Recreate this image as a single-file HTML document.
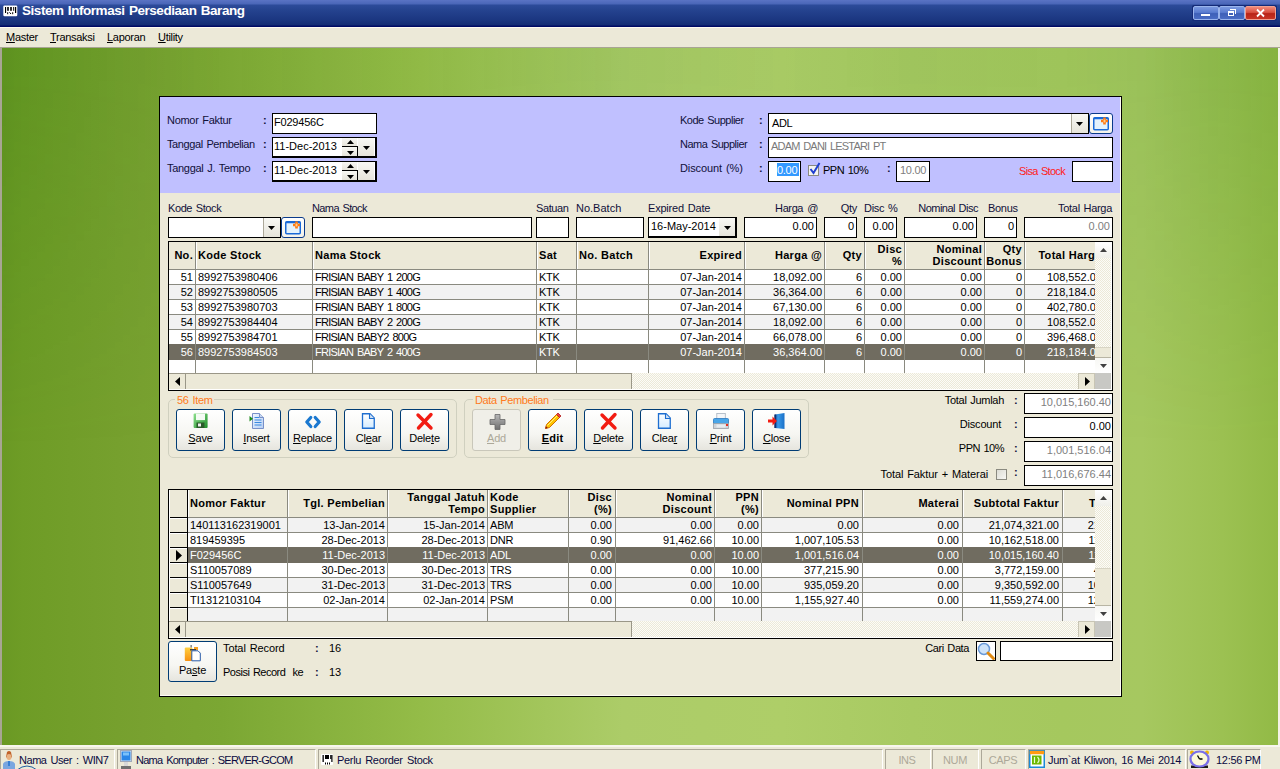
<!DOCTYPE html><html><head><meta charset="utf-8"><style>
*{margin:0;padding:0}
html,body{width:1280px;height:769px;overflow:hidden}
body{position:relative;font-family:"Liberation Sans",sans-serif;font-size:11px;color:#000;background:#ECE9D8}
.a{position:absolute}
.t{position:absolute;white-space:pre;line-height:13px;letter-spacing:-0.4px;word-spacing:1.5px;color:#10103a}
.r{text-align:right}
.c{text-align:center}
.n{letter-spacing:0;word-spacing:0}
.b{font-weight:bold;letter-spacing:0.3px;word-spacing:0;color:#000}
.u{text-decoration:underline}
svg{position:absolute;overflow:visible}
</style></head><body>
<div class="a" style="left:0px;top:0px;width:1280px;height:27px;background:linear-gradient(to bottom,#5a73c4 0px,#4a66b8 4px,#2d4b9a 5px,#25438f 10px,#1b3680 20px,#142d74 25px,#000a64 26px,#000a64 27px)"></div>
<div class="t" style="left:22px;top:3px;font-weight:bold;font-size:13.5px;letter-spacing:-0.45px;word-spacing:1px;color:#fff;line-height:16px">Sistem Informasi Persediaan Barang</div>
<svg style="left:3px;top:5px" width="15" height="12" viewBox="0 0 15 12"><rect x="0.3" y="0.6" width="14" height="10.6" rx="1.2" fill="#fff"/><rect x="2" y="2" width="1.1" height="6" fill="#000"/><rect x="4.2" y="2" width="1.6" height="3.8" fill="#000"/><rect x="7.2" y="2" width="1.6" height="3.8" fill="#000"/><rect x="10.2" y="2" width="1" height="3.8" fill="#000"/><rect x="12" y="2" width="1.2" height="6" fill="#000"/><rect x="4.2" y="7.2" width="1" height="2" fill="#000"/><path d="M6.5 7.3L8 9" stroke="#000" stroke-width="1"/><rect x="9.2" y="7.2" width="1" height="2" fill="#000"/></svg>
<div class="a" style="left:1192px;top:5px;width:85px;height:16px;background:#142a78;border-radius:2px"></div>
<div class="a" style="left:1193px;top:6px;width:26px;height:14px;background:linear-gradient(to bottom,#7a98e0 0%,#5a7cd0 45%,#3e60b8 55%,#4a6cc4 100%);border:1px solid #9ab4ec;box-sizing:border-box;border-radius:2px"></div>
<div class="a" style="left:1219px;top:6px;width:26px;height:14px;background:linear-gradient(to bottom,#7a98e0 0%,#5a7cd0 45%,#3e60b8 55%,#4a6cc4 100%);border:1px solid #9ab4ec;box-sizing:border-box;border-radius:2px"></div>
<div class="a" style="left:1245px;top:6px;width:31px;height:14px;background:linear-gradient(to bottom,#f08878 0%,#d85040 45%,#b82418 55%,#c83424 100%);border:1px solid #f0a090;box-sizing:border-box;border-radius:2px"></div>
<div class="a" style="left:1201px;top:14px;width:9px;height:2px;background:#fff"></div>
<div class="a" style="left:1228px;top:11px;width:6px;height:5px;border:1px solid #fff;border-top-width:2px;box-sizing:border-box"></div>
<div class="a" style="left:1230px;top:9px;width:6px;height:5px;border:1px solid #fff;border-top-width:1px;border-left:none;border-bottom:none;box-sizing:border-box"></div>
<svg style="left:1256px;top:9px" width="9" height="8"><path d="M1 0.5L8 7.5M8 0.5L1 7.5" stroke="#fff" stroke-width="1.8"/></svg>
<div class="a" style="left:0px;top:27px;width:1280px;height:1px;background:#fffbf0"></div>
<div class="a" style="left:0px;top:28px;width:1280px;height:19px;background:#ECE9D8"></div>
<div class="t" style="left:6px;top:31px;color:#000;letter-spacing:-0.3px"><span class="u">M</span>aster</div>
<div class="t" style="left:50px;top:31px;color:#000;letter-spacing:-0.3px"><span class="u">T</span>ransaksi</div>
<div class="t" style="left:107px;top:31px;color:#000;letter-spacing:-0.3px"><span class="u">L</span>aporan</div>
<div class="t" style="left:158px;top:31px;color:#000;letter-spacing:-0.3px"><span class="u">U</span>tility</div>
<div class="a" style="left:0px;top:47px;width:1280px;height:1px;background:#a8a594"></div>
<div class="a" style="left:0px;top:48px;width:2px;height:699px;background:#a8a594"></div>
<div class="a" style="left:2px;top:48px;width:1276px;height:697px;background:linear-gradient(to right,rgb(106,153,36) 0px,rgb(110,156,38) 20px,rgb(120,161,48) 140px,rgb(123,167,51) 220px,rgb(148,188,72) 420px,rgb(172,204,104) 620px,rgb(174,206,104) 780px,rgb(168,202,98) 910px,rgb(165,200,94) 1060px,rgb(166,200,96) 1140px,rgb(156,193,82) 1220px,rgb(146,186,70) 1276px)"></div>
<div class="a" style="left:2px;top:48px;width:1276px;height:400px;background:linear-gradient(to right,rgba(0,100,0,.12) 0px,rgba(0,100,0,.05) 140px,rgba(0,100,0,0) 220px,rgba(0,100,0,.02) 420px,rgba(0,100,0,.07) 600px,rgba(0,100,0,.03) 780px,rgba(0,100,0,.05) 910px,rgba(0,100,0,.04) 1060px,rgba(0,100,0,.07) 1140px,rgba(0,100,0,.10) 1210px,rgba(0,100,0,.08) 1276px);-webkit-mask-image:linear-gradient(to bottom,#000 0px,#000 22px,transparent 400px);mask-image:linear-gradient(to bottom,#000 0px,#000 22px,transparent 400px)"></div>
<div class="a" style="left:1278px;top:48px;width:2px;height:699px;background:#f4f2e8"></div>
<div class="a" style="left:0px;top:745px;width:1280px;height:2px;background:#f8f6ee"></div>
<div class="a" style="left:0px;top:747px;width:1280px;height:22px;background:#ECE9D8"></div>
<div class="a" style="left:0px;top:749px;width:115px;height:21px;box-sizing:border-box;border-left:1px solid #aca899;border-top:1px solid #aca899;border-right:1px solid #fff"></div>
<div class="a" style="left:117px;top:749px;width:199px;height:21px;box-sizing:border-box;border-left:1px solid #aca899;border-top:1px solid #aca899;border-right:1px solid #fff"></div>
<div class="a" style="left:318px;top:749px;width:565px;height:21px;box-sizing:border-box;border-left:1px solid #aca899;border-top:1px solid #aca899;border-right:1px solid #fff"></div>
<div class="a" style="left:885px;top:749px;width:46px;height:21px;box-sizing:border-box;border-left:1px solid #aca899;border-top:1px solid #aca899;border-right:1px solid #fff"></div>
<div class="a" style="left:932px;top:749px;width:47px;height:21px;box-sizing:border-box;border-left:1px solid #aca899;border-top:1px solid #aca899;border-right:1px solid #fff"></div>
<div class="a" style="left:981px;top:749px;width:45px;height:21px;box-sizing:border-box;border-left:1px solid #aca899;border-top:1px solid #aca899;border-right:1px solid #fff"></div>
<div class="a" style="left:1028px;top:749px;width:158px;height:21px;box-sizing:border-box;border-left:1px solid #aca899;border-top:1px solid #aca899;border-right:1px solid #fff"></div>
<div class="a" style="left:1187px;top:749px;width:74px;height:21px;box-sizing:border-box;border-left:1px solid #aca899;border-top:1px solid #aca899;border-right:1px solid #fff"></div>
<div class="t " style="left:19px;top:754px;color:#0a0a40;letter-spacing:-0.46px">Nama User : WIN7</div>
<div class="t " style="left:136px;top:754px;color:#0a0a40;letter-spacing:-0.75px">Nama Komputer : SERVER-GCOM</div>
<div class="t " style="left:337px;top:754px;color:#0a0a40;letter-spacing:-0.33px">Perlu Reorder Stock</div>
<div class="t c " style="left:707px;top:754px;width:400px;color:#aca899">INS</div>
<div class="t c " style="left:755px;top:754px;width:400px;color:#aca899">NUM</div>
<div class="t c " style="left:803px;top:754px;width:400px;color:#aca899">CAPS</div>
<div class="t " style="left:1048px;top:754px;color:#0a0a40;letter-spacing:-0.33px">Jum`at Kliwon, 16 Mei 2014</div>
<div class="t n" style="left:1216px;top:754px;color:#0a0a40;letter-spacing:-0.3px">12:56 PM</div>
<svg style="left:2px;top:750px" width="14" height="19" viewBox="0 0 14 19"><path d="M5 2 Q7 0 9 2 L10 7 Q7 10 4 7Z" fill="#c0622a"/><ellipse cx="7" cy="7" rx="2.5" ry="3" fill="#e8b080"/><path d="M1 19 L1 14 Q2 11 7 11 Q12 11 13 14 L13 19Z" fill="#7aa6e0"/><rect x="6.3" y="11" width="1.4" height="5" fill="#1a70d0"/></svg>
<svg style="left:16px;top:764px" width="22" height="6"><path d="M1 6 Q11 -2 21 6" fill="none" stroke="#2060a0" stroke-width="1"/></svg>
<svg style="left:120px;top:750px" width="12" height="19" viewBox="0 0 12 19"><rect x="0.5" y="0.5" width="11" height="11" fill="#dde6f0" stroke="#a0a8b8"/><rect x="1.5" y="1.5" width="9" height="9" fill="#2a86e8"/><rect x="3" y="2.5" width="6" height="3" fill="#8fd0ff" opacity=".8"/><rect x="4" y="12" width="4" height="4" fill="#d8d8d8"/><rect x="1" y="16" width="10" height="3" fill="#707070"/></svg>
<svg style="left:321px;top:754px" width="12" height="11" viewBox="0 0 12 11"><rect x="0" y="0" width="12" height="11" rx="1" fill="#fff"/><rect x="1.5" y="1" width="1.3" height="7" fill="#000"/><rect x="4" y="1" width="4" height="4" fill="#000"/><rect x="9.2" y="1" width="1.3" height="4" fill="#000"/><rect x="10.3" y="1" width="1.2" height="7" fill="#000"/><rect x="4" y="8.5" width="1" height="2" fill="#000"/><rect x="6" y="8.5" width="1" height="2" fill="#000"/><rect x="8" y="8.5" width="1" height="2" fill="#000"/></svg>
<svg style="left:1029px;top:750px" width="16" height="18" viewBox="0 0 16 18"><rect x="0.75" y="0.75" width="14.5" height="16.5" fill="#fff" stroke="#1c8ad8" stroke-width="1.5"/><rect x="0.75" y="0.75" width="14.5" height="3.5" fill="#ff9a10"/><rect x="3" y="5.5" width="9.5" height="9" fill="#6cb800"/><path d="M5.5 7v6M8.5 7q3 3 0 6" stroke="#e8ffd0" stroke-width="1.2" fill="none"/></svg>
<svg style="left:1189px;top:750px" width="21" height="18" viewBox="0 0 21 18"><circle cx="3" cy="2.5" r="2" fill="#f0b400"/><circle cx="18" cy="2.5" r="2" fill="#f0b400"/><rect x="2" y="15.5" width="17" height="2.5" fill="#1a1a1a"/><ellipse cx="10.5" cy="9" rx="9" ry="7.5" fill="#fbf8d8" stroke="#7a70e8" stroke-width="2.2"/><path d="M10.5 9 L8.5 5.5 M10.5 9 L13.5 9" stroke="#000" stroke-width="1.3"/></svg>
<div class="a" style="left:159px;top:96px;width:963px;height:601px;background:#ECE9D8;box-sizing:border-box;border:1px solid #000"></div>
<div class="a" style="left:1120px;top:97px;width:1px;height:599px;background:#fffdf6"></div>
<div class="a" style="left:160px;top:695px;width:961px;height:1px;background:#fffdf6"></div>
<div class="a" style="left:160px;top:97px;width:960px;height:96px;background:#C0C0FF"></div>
<div class="t " style="left:167px;top:114px;;letter-spacing:-0.3px;word-spacing:1px">Nomor Faktur</div>
<div class="t " style="left:263px;top:114px;font-weight:bold">:</div>
<div class="t " style="left:167px;top:138px;;letter-spacing:-0.4px;word-spacing:1px">Tanggal Pembelian</div>
<div class="t " style="left:263px;top:138px;font-weight:bold">:</div>
<div class="t " style="left:167px;top:162px;;letter-spacing:-0.3px;word-spacing:1px">Tanggal J. Tempo</div>
<div class="t " style="left:263px;top:162px;font-weight:bold">:</div>
<div class="a" style="left:272px;top:113px;width:105px;height:21px;background:#fff;box-sizing:border-box;border:1px solid #000;"></div>
<div class="t n" style="left:274px;top:116px;color:#000;letter-spacing:-0.2px">F029456C</div>
<div class="a" style="left:272px;top:137px;width:105px;height:21px;background:#fff;box-sizing:border-box;border:1px solid #000;border-right-width:2px;border-bottom-width:2px"></div>
<div class="t n" style="left:274px;top:140px;color:#000">11-Dec-2013</div>
<div class="a" style="left:342px;top:138px;width:15px;height:8px;background:linear-gradient(to bottom,#f8f8f4,#e6e4da)"></div>
<div class="a" style="left:342px;top:146px;width:16px;height:1px;background:#000"></div>
<div class="a" style="left:342px;top:147px;width:15px;height:9px;background:linear-gradient(to bottom,#f8f8f4,#e6e4da)"></div>
<div class="a" style="left:357px;top:147px;width:1px;height:9px;background:#000"></div>
<svg style="left:346.5px;top:140px" width="7" height="4"><path d="M0 4H7L3.5 0Z" fill="#000"/></svg>
<svg style="left:346.5px;top:151px" width="7" height="4"><path d="M0 0H7L3.5 4Z" fill="#000"/></svg>
<div class="a" style="left:358px;top:138px;width:16px;height:18px;background:linear-gradient(to bottom,#f8f8f4,#e6e4da)"></div>
<svg style="left:362.5px;top:146px" width="7" height="4"><path d="M0 0H7L3.5 4Z" fill="#000"/></svg>
<div class="a" style="left:272px;top:161px;width:105px;height:21px;background:#fff;box-sizing:border-box;border:1px solid #000;border-right-width:2px;border-bottom-width:2px"></div>
<div class="t n" style="left:274px;top:164px;color:#000">11-Dec-2013</div>
<div class="a" style="left:342px;top:162px;width:15px;height:8px;background:linear-gradient(to bottom,#f8f8f4,#e6e4da)"></div>
<div class="a" style="left:342px;top:170px;width:16px;height:1px;background:#000"></div>
<div class="a" style="left:342px;top:171px;width:15px;height:9px;background:linear-gradient(to bottom,#f8f8f4,#e6e4da)"></div>
<div class="a" style="left:357px;top:171px;width:1px;height:9px;background:#000"></div>
<svg style="left:346.5px;top:164px" width="7" height="4"><path d="M0 4H7L3.5 0Z" fill="#000"/></svg>
<svg style="left:346.5px;top:175px" width="7" height="4"><path d="M0 0H7L3.5 4Z" fill="#000"/></svg>
<div class="a" style="left:358px;top:162px;width:16px;height:18px;background:linear-gradient(to bottom,#f8f8f4,#e6e4da)"></div>
<svg style="left:362.5px;top:170px" width="7" height="4"><path d="M0 0H7L3.5 4Z" fill="#000"/></svg>
<div class="t " style="left:680px;top:114px;;letter-spacing:-0.5px;word-spacing:1px">Kode Supplier</div>
<div class="t " style="left:759px;top:114px;font-weight:bold">:</div>
<div class="t " style="left:680px;top:138px;;letter-spacing:-0.5px;word-spacing:1px">Nama Supplier</div>
<div class="t " style="left:759px;top:138px;font-weight:bold">:</div>
<div class="t " style="left:680px;top:162px;;letter-spacing:-0.1px;word-spacing:1px">Discount (%)</div>
<div class="t " style="left:759px;top:162px;font-weight:bold">:</div>
<div class="a" style="left:768px;top:113px;width:321px;height:21px;background:#fff;box-sizing:border-box;border:1px solid #000;"></div>
<div class="t " style="left:772px;top:117px;color:#000">ADL</div>
<div class="a" style="left:1071px;top:114px;width:17px;height:19px;background:linear-gradient(to bottom,#f8f8f4,#e6e4da);border-left:1px solid #aca899;box-sizing:border-box"></div>
<svg style="left:1076.0px;top:122.0px" width="7" height="4"><path d="M0 0H7L3.5 4Z" fill="#000"/></svg>
<div class="a" style="left:1089px;top:113px;width:24px;height:21px;background:linear-gradient(to bottom,#ffffff,#f4f2ea);box-sizing:border-box;border:1px solid #0a3a8a;border-radius:3px"></div>
<svg style="left:1093px;top:117px" width="16" height="14" viewBox="0 0 16 14"><rect x="0.75" y="0.75" width="14.5" height="12" rx="1" fill="#e4f2fc" stroke="#1a6ad8" stroke-width="1.5"/><rect x="0.75" y="0.75" width="14.5" height="1.5" fill="#1a6ad8"/><path d="M11.5 0.5V7.5M8 4H15" stroke="#ff7a10" stroke-width="2.6"/><path d="M11.5 2.5V5.5M10 4H13" stroke="#ffd8a0" stroke-width="0.8"/></svg>
<div class="a" style="left:768px;top:137px;width:345px;height:21px;background:#fff;box-sizing:border-box;border:1px solid #000;"></div>
<div class="t " style="left:771px;top:140px;color:#7a7a7a;letter-spacing:-0.82px">ADAM DANI LESTARI PT</div>
<div class="a" style="left:768px;top:161px;width:33px;height:21px;background:#fff;box-sizing:border-box;border:1px solid #000;"></div>
<div class="a" style="left:777px;top:163px;width:22px;height:13px;background:#3399ff"></div>
<div class="t n" style="left:777px;top:164px;color:#fff;letter-spacing:-0.3px">0.00</div>
<div class="a" style="left:808px;top:165px;width:11px;height:11px;background:#f4f4f0;box-sizing:border-box;border:1px solid #8a8a80"></div>
<svg style="left:809px;top:162px" width="12" height="13"><path d="M1.5 7 L4.5 11 L10.5 1" fill="none" stroke="#2040d0" stroke-width="2"/></svg>
<div class="t " style="left:823px;top:164px;color:#000;letter-spacing:-0.5px;word-spacing:1px">PPN 10%</div>
<div class="t " style="left:887px;top:162px;font-weight:bold">:</div>
<div class="a" style="left:896px;top:161px;width:34px;height:21px;background:#fff;box-sizing:border-box;border:1px solid #000;"></div>
<div class="t n" style="left:900px;top:164px;color:#808080;letter-spacing:-0.3px">10.00</div>
<div class="t " style="left:1019px;top:165px;color:#ff2020;letter-spacing:-0.7px;word-spacing:1px">Sisa Stock</div>
<div class="a" style="left:1072px;top:161px;width:41px;height:21px;background:#fff;box-sizing:border-box;border:1px solid #000;"></div>
<div class="t " style="left:168px;top:202px;;letter-spacing:-0.4px;word-spacing:1px">Kode Stock</div>
<div class="t " style="left:312px;top:202px;;letter-spacing:-0.6px;word-spacing:1px">Nama Stock</div>
<div class="t " style="left:536px;top:202px;;letter-spacing:-0.4px;word-spacing:1px">Satuan</div>
<div class="t " style="left:576px;top:202px;;letter-spacing:0.0px;word-spacing:1px">No.Batch</div>
<div class="t " style="left:648px;top:202px;;letter-spacing:-0.2px;word-spacing:1px">Expired Date</div>
<div class="t r " style="left:418px;top:202px;width:400px;">Harga @</div>
<div class="t r " style="left:457px;top:202px;width:400px;;letter-spacing:-0.3px;word-spacing:1px">Qty</div>
<div class="t " style="left:864px;top:202px;;letter-spacing:-0.3px;word-spacing:1px">Disc %</div>
<div class="t r " style="left:578px;top:202px;width:400px;;letter-spacing:-0.5px;word-spacing:1px">Nominal Disc</div>
<div class="t " style="left:988px;top:202px;;letter-spacing:-0.3px;word-spacing:1px">Bonus</div>
<div class="t r " style="left:712px;top:202px;width:400px;;letter-spacing:-0.3px;word-spacing:1px">Total Harga</div>
<div class="a" style="left:168px;top:217px;width:113px;height:21px;background:#fff;box-sizing:border-box;border:1px solid #000;"></div>
<div class="a" style="left:263px;top:218px;width:17px;height:19px;background:linear-gradient(to bottom,#f8f8f4,#e6e4da);border-left:1px solid #aca899;box-sizing:border-box"></div>
<svg style="left:268.0px;top:226.0px" width="7" height="4"><path d="M0 0H7L3.5 4Z" fill="#000"/></svg>
<div class="a" style="left:281px;top:217px;width:24px;height:21px;background:linear-gradient(to bottom,#ffffff,#f4f2ea);box-sizing:border-box;border:1px solid #0a3a8a;border-radius:3px"></div>
<svg style="left:285px;top:221px" width="16" height="14" viewBox="0 0 16 14"><rect x="0.75" y="0.75" width="14.5" height="12" rx="1" fill="#e4f2fc" stroke="#1a6ad8" stroke-width="1.5"/><rect x="0.75" y="0.75" width="14.5" height="1.5" fill="#1a6ad8"/><path d="M11.5 0.5V7.5M8 4H15" stroke="#ff7a10" stroke-width="2.6"/><path d="M11.5 2.5V5.5M10 4H13" stroke="#ffd8a0" stroke-width="0.8"/></svg>
<div class="a" style="left:312px;top:217px;width:220px;height:21px;background:#fff;box-sizing:border-box;border:1px solid #000;"></div>
<div class="a" style="left:536px;top:217px;width:33px;height:21px;background:#fff;box-sizing:border-box;border:1px solid #000;"></div>
<div class="a" style="left:576px;top:217px;width:68px;height:21px;background:#fff;box-sizing:border-box;border:1px solid #000;"></div>
<div class="a" style="left:648px;top:217px;width:89px;height:21px;background:#fff;box-sizing:border-box;border:1px solid #000;border-right-width:2px;border-bottom-width:2px"></div>
<div class="t n" style="left:651px;top:220px;color:#000">16-May-2014</div>
<div class="a" style="left:719px;top:218px;width:16px;height:18px;background:linear-gradient(to bottom,#f8f8f4,#e6e4da)"></div>
<svg style="left:723.5px;top:226px" width="7" height="4"><path d="M0 0H7L3.5 4Z" fill="#000"/></svg>
<div class="a" style="left:744px;top:217px;width:73px;height:21px;background:#fff;box-sizing:border-box;border:1px solid #000;"></div>
<div class="t r n" style="left:414px;top:220px;width:400px;color:#000">0.00</div>
<div class="a" style="left:824px;top:217px;width:33px;height:21px;background:#fff;box-sizing:border-box;border:1px solid #000;"></div>
<div class="t r n" style="left:454px;top:220px;width:400px;color:#000">0</div>
<div class="a" style="left:864px;top:217px;width:33px;height:21px;background:#fff;box-sizing:border-box;border:1px solid #000;"></div>
<div class="t r n" style="left:494px;top:220px;width:400px;color:#000">0.00</div>
<div class="a" style="left:904px;top:217px;width:73px;height:21px;background:#fff;box-sizing:border-box;border:1px solid #000;"></div>
<div class="t r n" style="left:574px;top:220px;width:400px;color:#000">0.00</div>
<div class="a" style="left:984px;top:217px;width:33px;height:21px;background:#fff;box-sizing:border-box;border:1px solid #000;"></div>
<div class="t r n" style="left:614px;top:220px;width:400px;color:#000">0</div>
<div class="a" style="left:1024px;top:217px;width:89px;height:21px;background:#fff;box-sizing:border-box;border:1px solid #000;"></div>
<div class="t r n" style="left:710px;top:220px;width:400px;color:#808080">0.00</div>
<div class="a" style="left:168px;top:241px;width:945px;height:150px;background:#fff;box-sizing:border-box;border:1px solid #000"></div>
<div class="a" style="left:169px;top:242px;width:926px;height:27px;background:#ECE9D8"></div>
<div class="a" style="left:169px;top:269px;width:926px;height:1px;background:#8a8a80"></div>
<div class="a" style="left:169px;top:270px;width:926px;height:14px;background:#fff"></div>
<div class="a" style="left:169px;top:284px;width:926px;height:1px;background:#8a8a80"></div>
<div class="a" style="left:169px;top:285px;width:926px;height:14px;background:#f2f2f2"></div>
<div class="a" style="left:169px;top:299px;width:926px;height:1px;background:#8a8a80"></div>
<div class="a" style="left:169px;top:300px;width:926px;height:14px;background:#fff"></div>
<div class="a" style="left:169px;top:314px;width:926px;height:1px;background:#8a8a80"></div>
<div class="a" style="left:169px;top:315px;width:926px;height:14px;background:#f2f2f2"></div>
<div class="a" style="left:169px;top:329px;width:926px;height:1px;background:#8a8a80"></div>
<div class="a" style="left:169px;top:330px;width:926px;height:14px;background:#fff"></div>
<div class="a" style="left:169px;top:344px;width:926px;height:1px;background:#8a8a80"></div>
<div class="a" style="left:169px;top:345px;width:926px;height:14px;background:#fff"></div>
<div class="a" style="left:169px;top:359px;width:926px;height:1px;background:#8a8a80"></div>
<div class="a" style="left:169px;top:360px;width:926px;height:13px;background:#fff"></div>
<div class="a" style="left:169px;top:344px;width:926px;height:16px;background:#706c60"></div>
<div class="a" style="left:195px;top:242px;width:1px;height:131px;background:#8a8a80"></div>
<div class="a" style="left:196px;top:242px;width:1px;height:27px;background:#fff"></div>
<div class="a" style="left:312px;top:242px;width:1px;height:131px;background:#8a8a80"></div>
<div class="a" style="left:313px;top:242px;width:1px;height:27px;background:#fff"></div>
<div class="a" style="left:536px;top:242px;width:1px;height:131px;background:#8a8a80"></div>
<div class="a" style="left:537px;top:242px;width:1px;height:27px;background:#fff"></div>
<div class="a" style="left:576px;top:242px;width:1px;height:131px;background:#8a8a80"></div>
<div class="a" style="left:577px;top:242px;width:1px;height:27px;background:#fff"></div>
<div class="a" style="left:648px;top:242px;width:1px;height:131px;background:#8a8a80"></div>
<div class="a" style="left:649px;top:242px;width:1px;height:27px;background:#fff"></div>
<div class="a" style="left:744px;top:242px;width:1px;height:131px;background:#8a8a80"></div>
<div class="a" style="left:745px;top:242px;width:1px;height:27px;background:#fff"></div>
<div class="a" style="left:824px;top:242px;width:1px;height:131px;background:#8a8a80"></div>
<div class="a" style="left:825px;top:242px;width:1px;height:27px;background:#fff"></div>
<div class="a" style="left:864px;top:242px;width:1px;height:131px;background:#8a8a80"></div>
<div class="a" style="left:865px;top:242px;width:1px;height:27px;background:#fff"></div>
<div class="a" style="left:904px;top:242px;width:1px;height:131px;background:#8a8a80"></div>
<div class="a" style="left:905px;top:242px;width:1px;height:27px;background:#fff"></div>
<div class="a" style="left:984px;top:242px;width:1px;height:131px;background:#8a8a80"></div>
<div class="a" style="left:985px;top:242px;width:1px;height:27px;background:#fff"></div>
<div class="a" style="left:1024px;top:242px;width:1px;height:131px;background:#8a8a80"></div>
<div class="a" style="left:1025px;top:242px;width:1px;height:27px;background:#fff"></div>
<div class="t r b" style="left:-207px;top:249px;width:400px;">No.</div>
<div class="t b" style="left:198px;top:249px;">Kode Stock</div>
<div class="t b" style="left:315px;top:249px;">Nama Stock</div>
<div class="t b" style="left:539px;top:249px;">Sat</div>
<div class="t b" style="left:579px;top:249px;">No. Batch</div>
<div class="t r b" style="left:342px;top:249px;width:400px;">Expired</div>
<div class="t r b" style="left:422px;top:249px;width:400px;">Harga @</div>
<div class="t r b" style="left:462px;top:249px;width:400px;">Qty</div>
<div class="t r b" style="left:502px;top:243px;width:400px;">Disc</div>
<div class="t r b" style="left:502px;top:255px;width:400px;">%</div>
<div class="t r b" style="left:582px;top:243px;width:400px;">Nominal</div>
<div class="t r b" style="left:582px;top:255px;width:400px;">Discount</div>
<div class="t r b" style="left:622px;top:243px;width:400px;">Qty</div>
<div class="t r b" style="left:622px;top:255px;width:400px;">Bonus</div>
<div class="a" style="left:1025px;top:242px;width:70px;height:27px;overflow:hidden">
<div class="t b r" style="left:-200px;top:7px;width:270px">Total Harg</div>
</div>
<div class="t r n" style="left:-207px;top:271px;width:400px;color:#000">51</div>
<div class="t n" style="left:198px;top:271px;color:#000">8992753980406</div>
<div class="t " style="left:315px;top:271px;color:#000;letter-spacing:-0.75px">FRISIAN BABY 1 200G</div>
<div class="t " style="left:539px;top:271px;color:#000;letter-spacing:-0.3px">KTK</div>
<div class="t r n" style="left:342px;top:271px;width:400px;color:#000">07-Jan-2014</div>
<div class="t r n" style="left:422px;top:271px;width:400px;color:#000">18,092.00</div>
<div class="t r n" style="left:462px;top:271px;width:400px;color:#000">6</div>
<div class="t r n" style="left:502px;top:271px;width:400px;color:#000">0.00</div>
<div class="t r n" style="left:582px;top:271px;width:400px;color:#000">0.00</div>
<div class="t r n" style="left:622px;top:271px;width:400px;color:#000">0</div>
<div class="a" style="left:1025px;top:269px;width:70px;height:15px;overflow:hidden"><div class="t n r" style="left:0;top:2px;width:77px;color:#000">108,552.00</div></div>
<div class="t r n" style="left:-207px;top:286px;width:400px;color:#000">52</div>
<div class="t n" style="left:198px;top:286px;color:#000">8992753980505</div>
<div class="t " style="left:315px;top:286px;color:#000;letter-spacing:-0.75px">FRISIAN BABY 1 400G</div>
<div class="t " style="left:539px;top:286px;color:#000;letter-spacing:-0.3px">KTK</div>
<div class="t r n" style="left:342px;top:286px;width:400px;color:#000">07-Jan-2014</div>
<div class="t r n" style="left:422px;top:286px;width:400px;color:#000">36,364.00</div>
<div class="t r n" style="left:462px;top:286px;width:400px;color:#000">6</div>
<div class="t r n" style="left:502px;top:286px;width:400px;color:#000">0.00</div>
<div class="t r n" style="left:582px;top:286px;width:400px;color:#000">0.00</div>
<div class="t r n" style="left:622px;top:286px;width:400px;color:#000">0</div>
<div class="a" style="left:1025px;top:284px;width:70px;height:15px;overflow:hidden"><div class="t n r" style="left:0;top:2px;width:77px;color:#000">218,184.00</div></div>
<div class="t r n" style="left:-207px;top:301px;width:400px;color:#000">53</div>
<div class="t n" style="left:198px;top:301px;color:#000">8992753980703</div>
<div class="t " style="left:315px;top:301px;color:#000;letter-spacing:-0.75px">FRISIAN BABY 1 800G</div>
<div class="t " style="left:539px;top:301px;color:#000;letter-spacing:-0.3px">KTK</div>
<div class="t r n" style="left:342px;top:301px;width:400px;color:#000">07-Jan-2014</div>
<div class="t r n" style="left:422px;top:301px;width:400px;color:#000">67,130.00</div>
<div class="t r n" style="left:462px;top:301px;width:400px;color:#000">6</div>
<div class="t r n" style="left:502px;top:301px;width:400px;color:#000">0.00</div>
<div class="t r n" style="left:582px;top:301px;width:400px;color:#000">0.00</div>
<div class="t r n" style="left:622px;top:301px;width:400px;color:#000">0</div>
<div class="a" style="left:1025px;top:299px;width:70px;height:15px;overflow:hidden"><div class="t n r" style="left:0;top:2px;width:77px;color:#000">402,780.00</div></div>
<div class="t r n" style="left:-207px;top:316px;width:400px;color:#000">54</div>
<div class="t n" style="left:198px;top:316px;color:#000">8992753984404</div>
<div class="t " style="left:315px;top:316px;color:#000;letter-spacing:-0.75px">FRISIAN BABY 2 200G</div>
<div class="t " style="left:539px;top:316px;color:#000;letter-spacing:-0.3px">KTK</div>
<div class="t r n" style="left:342px;top:316px;width:400px;color:#000">07-Jan-2014</div>
<div class="t r n" style="left:422px;top:316px;width:400px;color:#000">18,092.00</div>
<div class="t r n" style="left:462px;top:316px;width:400px;color:#000">6</div>
<div class="t r n" style="left:502px;top:316px;width:400px;color:#000">0.00</div>
<div class="t r n" style="left:582px;top:316px;width:400px;color:#000">0.00</div>
<div class="t r n" style="left:622px;top:316px;width:400px;color:#000">0</div>
<div class="a" style="left:1025px;top:314px;width:70px;height:15px;overflow:hidden"><div class="t n r" style="left:0;top:2px;width:77px;color:#000">108,552.00</div></div>
<div class="t r n" style="left:-207px;top:331px;width:400px;color:#000">55</div>
<div class="t n" style="left:198px;top:331px;color:#000">8992753984701</div>
<div class="t " style="left:315px;top:331px;color:#000;letter-spacing:-0.75px">FRISIAN BABY2 800G</div>
<div class="t " style="left:539px;top:331px;color:#000;letter-spacing:-0.3px">KTK</div>
<div class="t r n" style="left:342px;top:331px;width:400px;color:#000">07-Jan-2014</div>
<div class="t r n" style="left:422px;top:331px;width:400px;color:#000">66,078.00</div>
<div class="t r n" style="left:462px;top:331px;width:400px;color:#000">6</div>
<div class="t r n" style="left:502px;top:331px;width:400px;color:#000">0.00</div>
<div class="t r n" style="left:582px;top:331px;width:400px;color:#000">0.00</div>
<div class="t r n" style="left:622px;top:331px;width:400px;color:#000">0</div>
<div class="a" style="left:1025px;top:329px;width:70px;height:15px;overflow:hidden"><div class="t n r" style="left:0;top:2px;width:77px;color:#000">396,468.00</div></div>
<div class="t r n" style="left:-207px;top:346px;width:400px;color:#fff">56</div>
<div class="t n" style="left:198px;top:346px;color:#fff">8992753984503</div>
<div class="t " style="left:315px;top:346px;color:#fff;letter-spacing:-0.75px">FRISIAN BABY 2 400G</div>
<div class="t " style="left:539px;top:346px;color:#fff;letter-spacing:-0.3px">KTK</div>
<div class="t r n" style="left:342px;top:346px;width:400px;color:#fff">07-Jan-2014</div>
<div class="t r n" style="left:422px;top:346px;width:400px;color:#fff">36,364.00</div>
<div class="t r n" style="left:462px;top:346px;width:400px;color:#fff">6</div>
<div class="t r n" style="left:502px;top:346px;width:400px;color:#fff">0.00</div>
<div class="t r n" style="left:582px;top:346px;width:400px;color:#fff">0.00</div>
<div class="t r n" style="left:622px;top:346px;width:400px;color:#fff">0</div>
<div class="a" style="left:1025px;top:344px;width:70px;height:15px;overflow:hidden"><div class="t n r" style="left:0;top:2px;width:77px;color:#fff">218,184.00</div></div>
<div class="a" style="left:1095px;top:242px;width:16px;height:131px;background-color:#fcfcf8;background-image:linear-gradient(45deg,#ece9d8 25%,transparent 25%,transparent 75%,#ece9d8 75%),linear-gradient(45deg,#ece9d8 25%,transparent 25%,transparent 75%,#ece9d8 75%);background-size:2px 2px;background-position:0 0,1px 1px"></div>
<div class="a" style="left:1095px;top:242px;width:16px;height:16px;background:linear-gradient(to bottom,#ffffff,#f0f0ea)"></div>
<svg style="left:1099.5px;top:248px" width="7" height="4"><path d="M0 4H7L3.5 0Z" fill="#404040"/></svg>
<div class="a" style="left:1095px;top:357px;width:16px;height:16px;background:linear-gradient(to bottom,#f6f6f2,#ffffff)"></div>
<svg style="left:1099.5px;top:364px" width="7" height="4"><path d="M0 0H7L3.5 4Z" fill="#404040"/></svg>
<div class="a" style="left:1095px;top:347px;width:16px;height:11px;background:#ECE9D8;box-sizing:border-box;border-top:1px solid #d8d5c4;border-bottom:1px solid #b8b5a4"></div>
<div class="a" style="left:169px;top:373px;width:926px;height:16px;background-color:#fcfcf8;background-image:linear-gradient(45deg,#ece9d8 25%,transparent 25%,transparent 75%,#ece9d8 75%),linear-gradient(45deg,#ece9d8 25%,transparent 25%,transparent 75%,#ece9d8 75%);background-size:2px 2px;background-position:0 0,1px 1px"></div>
<div class="a" style="left:169px;top:373px;width:463px;height:16px;background:#ECE9D8;box-sizing:border-box;border-top:1px solid #9a9788;border-right:1px solid #9a9788"></div>
<div class="a" style="left:185px;top:373px;width:1px;height:16px;background:#9a9788"></div>
<svg style="left:175px;top:376.5px" width="5" height="9"><path d="M5 0V9L0 4.5Z" fill="#000"/></svg>
<div class="a" style="left:1078px;top:373px;width:17px;height:16px;background:#ECE9D8;box-sizing:border-box;border:1px solid #c8c5b4;border-bottom:none"></div>
<svg style="left:1085px;top:376.5px" width="5" height="9"><path d="M0 0V9L5 4.5Z" fill="#000"/></svg>
<div class="a" style="left:1095px;top:373px;width:16px;height:16px;background:#c8c8c4"></div>
<div class="a" style="left:168px;top:399px;width:289px;height:59px;box-sizing:border-box;border:1px solid #d0d0bf;border-radius:5px"></div>
<div class="a" style="left:175px;top:396px;width:39px;height:6px;background:#ECE9D8"></div>
<div class="t " style="left:177px;top:394px;color:#ff7a20;letter-spacing:-0.3px;word-spacing:1px">56 Item</div>
<div class="a" style="left:464px;top:399px;width:345px;height:59px;box-sizing:border-box;border:1px solid #d0d0bf;border-radius:5px"></div>
<div class="a" style="left:473px;top:396px;width:80px;height:6px;background:#ECE9D8"></div>
<div class="t " style="left:475px;top:394px;color:#ff7a20;letter-spacing:-0.4px;word-spacing:1px">Data Pembelian</div>
<div class="a" style="left:176px;top:409px;width:49px;height:42px;box-sizing:border-box;border:1px solid #003c74;border-radius:3px;background:linear-gradient(to bottom,#ffffff 0%,#f6f6f2 60%,#e6e5de 100%)"></div>
<svg style="left:192.5px;top:413px" width="17" height="17" viewBox="0 0 17 17"><defs><linearGradient id="gs" x1="0" y1="0" x2="1" y2="1"><stop offset="0" stop-color="#8ee08e"/><stop offset="1" stop-color="#1f8f2a"/></linearGradient></defs><rect x="0.6" y="0.6" width="14" height="14.4" rx="1" fill="url(#gs)"/><rect x="3" y="0.6" width="9" height="6.5" fill="#f4fbf4"/><rect x="3.5" y="9.5" width="8" height="5.5" fill="#2a5a2a"/><rect x="5" y="10.5" width="3" height="3" fill="#f0f0f0"/></svg>
<div class="t c" style="left:160.5px;top:432px;width:80px;color:#000;letter-spacing:-0.2px;"><span class="u">S</span>ave</div>
<div class="a" style="left:232px;top:409px;width:49px;height:42px;box-sizing:border-box;border:1px solid #003c74;border-radius:3px;background:linear-gradient(to bottom,#ffffff 0%,#f6f6f2 60%,#e6e5de 100%)"></div>
<svg style="left:248.5px;top:413px" width="17" height="17" viewBox="0 0 17 17"><defs><linearGradient id="gi" x1="0" y1="0" x2="1" y2="1"><stop offset="0" stop-color="#f0f6ff"/><stop offset="1" stop-color="#b8d0f4"/></linearGradient></defs><path d="M3.5 0.5H10.5L14.5 4.5V15.5H3.5Z" fill="url(#gi)" stroke="#7890c8"/><path d="M10.5 0.5V4.5H14.5" fill="#c8d8f0" stroke="#7890c8"/><path d="M5.5 4.5H10M5.5 7H12.5M5.5 9.5H12.5M5.5 12H12.5" stroke="#3a8ae0" stroke-width="1.1"/><path d="M0.5 3V8.5L4 5.75Z" fill="#1a8a1a"/></svg>
<div class="t c" style="left:216.5px;top:432px;width:80px;color:#000;letter-spacing:-0.2px;"><span class="u">I</span>nsert</div>
<div class="a" style="left:288px;top:409px;width:49px;height:42px;box-sizing:border-box;border:1px solid #003c74;border-radius:3px;background:linear-gradient(to bottom,#ffffff 0%,#f6f6f2 60%,#e6e5de 100%)"></div>
<svg style="left:304.5px;top:413px" width="17" height="17" viewBox="0 0 17 17"><path d="M5.8 4.5L1.8 9L5.8 13.5" fill="none" stroke="#1a78d0" stroke-width="3.2" stroke-linecap="round" stroke-linejoin="round"/><path d="M10.2 4.5L14.2 9L10.2 13.5" fill="none" stroke="#1a78d0" stroke-width="3.2" stroke-linecap="round" stroke-linejoin="round"/></svg>
<div class="t c" style="left:272.5px;top:432px;width:80px;color:#000;letter-spacing:-0.2px;"><span class="u">R</span>eplace</div>
<div class="a" style="left:344px;top:409px;width:49px;height:42px;box-sizing:border-box;border:1px solid #003c74;border-radius:3px;background:linear-gradient(to bottom,#ffffff 0%,#f6f6f2 60%,#e6e5de 100%)"></div>
<svg style="left:360.5px;top:413px" width="17" height="17" viewBox="0 0 17 17"><defs><linearGradient id="gc" x1="0" y1="0" x2="0" y2="1"><stop offset="0" stop-color="#ffffff"/><stop offset="1" stop-color="#d4ecff"/></linearGradient></defs><path d="M1.5 0.75H9L13.25 5V15.25H1.5Z" fill="url(#gc)" stroke="#1e6ed0" stroke-width="1.3"/><path d="M8.5 0.75V5.5H13.25" fill="#cfe0f4" stroke="#1e6ed0" stroke-width="1.1"/></svg>
<div class="t c" style="left:328.5px;top:432px;width:80px;color:#000;letter-spacing:-0.2px;">Cl<span class="u">e</span>ar</div>
<div class="a" style="left:400px;top:409px;width:49px;height:42px;box-sizing:border-box;border:1px solid #003c74;border-radius:3px;background:linear-gradient(to bottom,#ffffff 0%,#f6f6f2 60%,#e6e5de 100%)"></div>
<svg style="left:416.5px;top:413px" width="17" height="17" viewBox="0 0 17 17"><path d="M1 2L14 15M14 1.5L1.5 15" stroke="#f21c12" stroke-width="3.4" stroke-linecap="round"/></svg>
<div class="t c" style="left:384.5px;top:432px;width:80px;color:#000;letter-spacing:-0.2px;">Dele<span class="u">t</span>e</div>
<div class="a" style="left:472px;top:409px;width:49px;height:42px;box-sizing:border-box;border:1px solid #c9c7ba;border-radius:3px;background:#f0efe8"></div>
<svg style="left:488.5px;top:413px" width="17" height="17" viewBox="0 0 17 17"><defs><linearGradient id="ga" x1="0" y1="0" x2="0" y2="1"><stop offset="0" stop-color="#b8b8b8"/><stop offset="1" stop-color="#707070"/></linearGradient></defs><path d="M6 1.5H11V6.5H16V11.5H11V16.5H6V11.5H1V6.5H6Z" fill="url(#ga)" stroke="#686868" stroke-width="0.8"/></svg>
<div class="t c" style="left:456.5px;top:432px;width:80px;color:#aca899;letter-spacing:-0.2px;"><span class="u">A</span>dd</div>
<div class="a" style="left:528px;top:409px;width:49px;height:42px;box-sizing:border-box;border:1px solid #003c74;border-radius:3px;background:linear-gradient(to bottom,#ffffff 0%,#f6f6f2 60%,#e6e5de 100%)"></div>
<svg style="left:544.5px;top:413px" width="17" height="17" viewBox="0 0 17 17"><path d="M0.5 15.5L1.5 11.5L11.5 1.5L14.5 4.5L4.5 14.5Z" fill="#ffc400" stroke="#d07000" stroke-width="1"/><path d="M2.5 12.5L12.5 2.5" stroke="#fff080" stroke-width="1"/><path d="M11.5 1.5L13 0L16 3L14.5 4.5Z" fill="#f04040" stroke="#b02020" stroke-width="0.8"/><path d="M0.3 15.7L0.9 13.2L2.8 15.1Z" fill="#8a1010"/></svg>
<div class="t c" style="left:512.5px;top:432px;width:80px;color:#000;font-weight:bold;letter-spacing:0.2px;"><span class="u">E</span>dit</div>
<div class="a" style="left:584px;top:409px;width:49px;height:42px;box-sizing:border-box;border:1px solid #003c74;border-radius:3px;background:linear-gradient(to bottom,#ffffff 0%,#f6f6f2 60%,#e6e5de 100%)"></div>
<svg style="left:600.5px;top:413px" width="17" height="17" viewBox="0 0 17 17"><path d="M1 2L14 15M14 1.5L1.5 15" stroke="#f21c12" stroke-width="3.4" stroke-linecap="round"/></svg>
<div class="t c" style="left:568.5px;top:432px;width:80px;color:#000;letter-spacing:-0.2px;"><span class="u">D</span>elete</div>
<div class="a" style="left:640px;top:409px;width:49px;height:42px;box-sizing:border-box;border:1px solid #003c74;border-radius:3px;background:linear-gradient(to bottom,#ffffff 0%,#f6f6f2 60%,#e6e5de 100%)"></div>
<svg style="left:656.5px;top:413px" width="17" height="17" viewBox="0 0 17 17"><defs><linearGradient id="gc" x1="0" y1="0" x2="0" y2="1"><stop offset="0" stop-color="#ffffff"/><stop offset="1" stop-color="#d4ecff"/></linearGradient></defs><path d="M1.5 0.75H9L13.25 5V15.25H1.5Z" fill="url(#gc)" stroke="#1e6ed0" stroke-width="1.3"/><path d="M8.5 0.75V5.5H13.25" fill="#cfe0f4" stroke="#1e6ed0" stroke-width="1.1"/></svg>
<div class="t c" style="left:624.5px;top:432px;width:80px;color:#000;letter-spacing:-0.2px;">Clea<span class="u">r</span></div>
<div class="a" style="left:696px;top:409px;width:49px;height:42px;box-sizing:border-box;border:1px solid #003c74;border-radius:3px;background:linear-gradient(to bottom,#ffffff 0%,#f6f6f2 60%,#e6e5de 100%)"></div>
<svg style="left:712.5px;top:413px" width="17" height="17" viewBox="0 0 17 17"><rect x="3.8" y="0.5" width="8.5" height="6" fill="#f4f6f8" stroke="#a8b4c0" stroke-width="0.8"/><rect x="0.5" y="5.5" width="15" height="6" rx="1" fill="#4aa6e8" stroke="#2a78c0" stroke-width="0.8"/><rect x="0.5" y="10.5" width="15" height="5" fill="#d0d4d8" stroke="#9aa0a8" stroke-width="0.8"/><rect x="3.5" y="11.5" width="9" height="3" fill="#e8ecf0"/><rect x="13" y="11" width="2" height="2" fill="#e83020"/></svg>
<div class="t c" style="left:680.5px;top:432px;width:80px;color:#000;letter-spacing:-0.2px;"><span class="u">P</span>rint</div>
<div class="a" style="left:752px;top:409px;width:49px;height:42px;box-sizing:border-box;border:1px solid #003c74;border-radius:3px;background:linear-gradient(to bottom,#ffffff 0%,#f6f6f2 60%,#e6e5de 100%)"></div>
<svg style="left:768.5px;top:413px" width="17" height="17" viewBox="0 0 17 17"><defs><linearGradient id="gd" x1="0" y1="0" x2="1" y2="0"><stop offset="0" stop-color="#0a3a8a"/><stop offset="0.3" stop-color="#3a9ae8"/><stop offset="1" stop-color="#1a70c8"/></linearGradient></defs><path d="M6 1.5L15.5 0V16L6 15Z" fill="url(#gd)"/><path d="M6 1.5V15" stroke="#0a2a6a" stroke-width="1.4"/><path d="M-1 6.5H3.5V3.5L8 8L3.5 12.5V9.5H-1Z" fill="#f21c12"/></svg>
<div class="t c" style="left:736.5px;top:432px;width:80px;color:#000;letter-spacing:-0.2px;"><span class="u">C</span>lose</div>
<div class="t r " style="left:604px;top:394px;width:400px;color:#000;letter-spacing:-0.3px;word-spacing:1px">Total Jumlah</div>
<div class="t " style="left:1014px;top:394px;font-weight:bold">:</div>
<div class="a" style="left:1024px;top:393px;width:89px;height:21px;background:#fff;box-sizing:border-box;border:1px solid #000;"></div>
<div class="t r n" style="left:711px;top:396px;width:400px;color:#808080">10,015,160.40</div>
<div class="t r " style="left:601px;top:418px;width:400px;color:#000;letter-spacing:-0.2px;word-spacing:1px">Discount</div>
<div class="t " style="left:1014px;top:418px;font-weight:bold">:</div>
<div class="a" style="left:1024px;top:417px;width:89px;height:21px;background:#fff;box-sizing:border-box;border:1px solid #000;"></div>
<div class="t r n" style="left:711px;top:420px;width:400px;color:#000">0.00</div>
<div class="t r " style="left:604px;top:442px;width:400px;color:#000;letter-spacing:-0.5px;word-spacing:1px">PPN 10%</div>
<div class="t " style="left:1014px;top:442px;font-weight:bold">:</div>
<div class="a" style="left:1024px;top:441px;width:89px;height:21px;background:#fff;box-sizing:border-box;border:1px solid #000;"></div>
<div class="t r n" style="left:711px;top:444px;width:400px;color:#808080">1,001,516.04</div>
<div class="t r " style="left:588px;top:468px;width:400px;color:#000;letter-spacing:-0.1px;word-spacing:1px">Total Faktur + Materai</div>
<div class="a" style="left:996px;top:469px;width:11px;height:11px;background:linear-gradient(135deg,#dcdcd4,#f8f8f4);box-sizing:border-box;border:1px solid #8a8a80"></div>
<div class="t " style="left:1014px;top:466px;font-weight:bold">:</div>
<div class="a" style="left:1024px;top:465px;width:89px;height:21px;background:#fff;box-sizing:border-box;border:1px solid #000;"></div>
<div class="t r n" style="left:711px;top:468px;width:400px;color:#808080">11,016,676.44</div>
<div class="a" style="left:168px;top:489px;width:945px;height:150px;background:#fff;box-sizing:border-box;border:1px solid #000"></div>
<div class="a" style="left:169px;top:490px;width:926px;height:27px;background:#ECE9D8"></div>
<div class="a" style="left:169px;top:517px;width:926px;height:1px;background:#8a8a80"></div>
<div class="a" style="left:169px;top:518px;width:926px;height:14px;background:#f2f2f2"></div>
<div class="a" style="left:169px;top:532px;width:926px;height:1px;background:#8a8a80"></div>
<div class="a" style="left:169px;top:533px;width:926px;height:14px;background:#fff"></div>
<div class="a" style="left:169px;top:547px;width:926px;height:1px;background:#8a8a80"></div>
<div class="a" style="left:169px;top:548px;width:926px;height:14px;background:#fff"></div>
<div class="a" style="left:169px;top:562px;width:926px;height:1px;background:#8a8a80"></div>
<div class="a" style="left:169px;top:563px;width:926px;height:14px;background:#fff"></div>
<div class="a" style="left:169px;top:577px;width:926px;height:1px;background:#8a8a80"></div>
<div class="a" style="left:169px;top:578px;width:926px;height:14px;background:#f2f2f2"></div>
<div class="a" style="left:169px;top:592px;width:926px;height:1px;background:#8a8a80"></div>
<div class="a" style="left:169px;top:593px;width:926px;height:14px;background:#fff"></div>
<div class="a" style="left:169px;top:607px;width:926px;height:1px;background:#8a8a80"></div>
<div class="a" style="left:169px;top:608px;width:926px;height:13px;background:#f2f2f2"></div>
<div class="a" style="left:188px;top:547px;width:907px;height:16px;background:#706c60"></div>
<div class="a" style="left:187px;top:490px;width:1px;height:131px;background:#8a8a80"></div>
<div class="a" style="left:188px;top:490px;width:1px;height:27px;background:#fff"></div>
<div class="a" style="left:287px;top:490px;width:1px;height:131px;background:#8a8a80"></div>
<div class="a" style="left:288px;top:490px;width:1px;height:27px;background:#fff"></div>
<div class="a" style="left:387px;top:490px;width:1px;height:131px;background:#8a8a80"></div>
<div class="a" style="left:388px;top:490px;width:1px;height:27px;background:#fff"></div>
<div class="a" style="left:487px;top:490px;width:1px;height:131px;background:#8a8a80"></div>
<div class="a" style="left:488px;top:490px;width:1px;height:27px;background:#fff"></div>
<div class="a" style="left:568px;top:490px;width:1px;height:131px;background:#8a8a80"></div>
<div class="a" style="left:569px;top:490px;width:1px;height:27px;background:#fff"></div>
<div class="a" style="left:615px;top:490px;width:1px;height:131px;background:#8a8a80"></div>
<div class="a" style="left:616px;top:490px;width:1px;height:27px;background:#fff"></div>
<div class="a" style="left:714px;top:490px;width:1px;height:131px;background:#8a8a80"></div>
<div class="a" style="left:715px;top:490px;width:1px;height:27px;background:#fff"></div>
<div class="a" style="left:761px;top:490px;width:1px;height:131px;background:#8a8a80"></div>
<div class="a" style="left:762px;top:490px;width:1px;height:27px;background:#fff"></div>
<div class="a" style="left:862px;top:490px;width:1px;height:131px;background:#8a8a80"></div>
<div class="a" style="left:863px;top:490px;width:1px;height:27px;background:#fff"></div>
<div class="a" style="left:962px;top:490px;width:1px;height:131px;background:#8a8a80"></div>
<div class="a" style="left:963px;top:490px;width:1px;height:27px;background:#fff"></div>
<div class="a" style="left:1062px;top:490px;width:1px;height:131px;background:#8a8a80"></div>
<div class="a" style="left:1063px;top:490px;width:1px;height:27px;background:#fff"></div>
<div class="a" style="left:169px;top:490px;width:18px;height:131px;background:#ECE9D8"></div>
<div class="a" style="left:187px;top:490px;width:1px;height:131px;background:#000"></div>
<div class="a" style="left:169px;top:517px;width:18px;height:1px;background:#000"></div>
<div class="a" style="left:169px;top:518px;width:18px;height:1px;background:#fff"></div>
<div class="a" style="left:169px;top:532px;width:18px;height:1px;background:#000"></div>
<div class="a" style="left:169px;top:533px;width:18px;height:1px;background:#fff"></div>
<div class="a" style="left:169px;top:547px;width:18px;height:1px;background:#000"></div>
<div class="a" style="left:169px;top:548px;width:18px;height:1px;background:#fff"></div>
<div class="a" style="left:169px;top:562px;width:18px;height:1px;background:#000"></div>
<div class="a" style="left:169px;top:563px;width:18px;height:1px;background:#fff"></div>
<div class="a" style="left:169px;top:577px;width:18px;height:1px;background:#000"></div>
<div class="a" style="left:169px;top:578px;width:18px;height:1px;background:#fff"></div>
<div class="a" style="left:169px;top:592px;width:18px;height:1px;background:#000"></div>
<div class="a" style="left:169px;top:593px;width:18px;height:1px;background:#fff"></div>
<div class="a" style="left:169px;top:607px;width:18px;height:1px;background:#000"></div>
<div class="a" style="left:169px;top:608px;width:18px;height:1px;background:#fff"></div>
<div class="a" style="left:169px;top:490px;width:1px;height:131px;background:#fff"></div>
<svg style="left:176px;top:550px" width="6" height="11"><path d="M0 0V11L6 5.5Z" fill="#000"/></svg>
<div class="t b" style="left:190px;top:497px;">Nomor Faktur</div>
<div class="t r b" style="left:-15px;top:497px;width:400px;">Tgl. Pembelian</div>
<div class="t r b" style="left:85px;top:491px;width:400px;">Tanggal Jatuh</div>
<div class="t r b" style="left:85px;top:503px;width:400px;">Tempo</div>
<div class="t b" style="left:490px;top:491px;">Kode</div>
<div class="t b" style="left:490px;top:503px;">Supplier</div>
<div class="t r b" style="left:212px;top:491px;width:400px;">Disc</div>
<div class="t r b" style="left:212px;top:503px;width:400px;">(%)</div>
<div class="t r b" style="left:312px;top:491px;width:400px;">Nominal</div>
<div class="t r b" style="left:312px;top:503px;width:400px;">Discount</div>
<div class="t r b" style="left:359px;top:491px;width:400px;">PPN</div>
<div class="t r b" style="left:359px;top:503px;width:400px;">(%)</div>
<div class="t r b" style="left:459px;top:497px;width:400px;">Nominal PPN</div>
<div class="t r b" style="left:559px;top:497px;width:400px;">Materai</div>
<div class="t r b" style="left:659px;top:497px;width:400px;">Subtotal Faktur</div>
<div class="a" style="left:1063px;top:490px;width:32px;height:27px;overflow:hidden"><div class="t b" style="left:26px;top:7px">Total</div></div>
<div class="t n" style="left:190px;top:519px;color:#000">140113162319001</div>
<div class="t r n" style="left:-15px;top:519px;width:400px;color:#000">13-Jan-2014</div>
<div class="t r n" style="left:85px;top:519px;width:400px;color:#000">15-Jan-2014</div>
<div class="t " style="left:490px;top:519px;color:#000;letter-spacing:-0.2px">ABM</div>
<div class="t r n" style="left:212px;top:519px;width:400px;color:#000">0.00</div>
<div class="t r n" style="left:312px;top:519px;width:400px;color:#000">0.00</div>
<div class="t r n" style="left:359px;top:519px;width:400px;color:#000">0.00</div>
<div class="t r n" style="left:459px;top:519px;width:400px;color:#000">0.00</div>
<div class="t r n" style="left:559px;top:519px;width:400px;color:#000">0.00</div>
<div class="t r n" style="left:659px;top:519px;width:400px;color:#000">21,074,321.00</div>
<div class="a" style="left:1063px;top:517px;width:32px;height:15px;overflow:hidden"><div class="t n r" style="left:0;top:2px;width:95px;color:#000">21,074,321.00</div></div>
<div class="t n" style="left:190px;top:534px;color:#000">819459395</div>
<div class="t r n" style="left:-15px;top:534px;width:400px;color:#000">28-Dec-2013</div>
<div class="t r n" style="left:85px;top:534px;width:400px;color:#000">28-Dec-2013</div>
<div class="t " style="left:490px;top:534px;color:#000;letter-spacing:-0.2px">DNR</div>
<div class="t r n" style="left:212px;top:534px;width:400px;color:#000">0.90</div>
<div class="t r n" style="left:312px;top:534px;width:400px;color:#000">91,462.66</div>
<div class="t r n" style="left:359px;top:534px;width:400px;color:#000">10.00</div>
<div class="t r n" style="left:459px;top:534px;width:400px;color:#000">1,007,105.53</div>
<div class="t r n" style="left:559px;top:534px;width:400px;color:#000">0.00</div>
<div class="t r n" style="left:659px;top:534px;width:400px;color:#000">10,162,518.00</div>
<div class="a" style="left:1063px;top:532px;width:32px;height:15px;overflow:hidden"><div class="t n r" style="left:0;top:2px;width:95px;color:#000">11,078,160.87</div></div>
<div class="t n" style="left:190px;top:549px;color:#fff">F029456C</div>
<div class="t r n" style="left:-15px;top:549px;width:400px;color:#fff">11-Dec-2013</div>
<div class="t r n" style="left:85px;top:549px;width:400px;color:#fff">11-Dec-2013</div>
<div class="t " style="left:490px;top:549px;color:#fff;letter-spacing:-0.2px">ADL</div>
<div class="t r n" style="left:212px;top:549px;width:400px;color:#fff">0.00</div>
<div class="t r n" style="left:312px;top:549px;width:400px;color:#fff">0.00</div>
<div class="t r n" style="left:359px;top:549px;width:400px;color:#fff">10.00</div>
<div class="t r n" style="left:459px;top:549px;width:400px;color:#fff">1,001,516.04</div>
<div class="t r n" style="left:559px;top:549px;width:400px;color:#fff">0.00</div>
<div class="t r n" style="left:659px;top:549px;width:400px;color:#fff">10,015,160.40</div>
<div class="a" style="left:1063px;top:547px;width:32px;height:15px;overflow:hidden"><div class="t n r" style="left:0;top:2px;width:95px;color:#fff">11,016,676.44</div></div>
<div class="t n" style="left:190px;top:564px;color:#000">S110057089</div>
<div class="t r n" style="left:-15px;top:564px;width:400px;color:#000">30-Dec-2013</div>
<div class="t r n" style="left:85px;top:564px;width:400px;color:#000">30-Dec-2013</div>
<div class="t " style="left:490px;top:564px;color:#000;letter-spacing:-0.2px">TRS</div>
<div class="t r n" style="left:212px;top:564px;width:400px;color:#000">0.00</div>
<div class="t r n" style="left:312px;top:564px;width:400px;color:#000">0.00</div>
<div class="t r n" style="left:359px;top:564px;width:400px;color:#000">10.00</div>
<div class="t r n" style="left:459px;top:564px;width:400px;color:#000">377,215.90</div>
<div class="t r n" style="left:559px;top:564px;width:400px;color:#000">0.00</div>
<div class="t r n" style="left:659px;top:564px;width:400px;color:#000">3,772,159.00</div>
<div class="a" style="left:1063px;top:562px;width:32px;height:15px;overflow:hidden"><div class="t n r" style="left:0;top:2px;width:95px;color:#000">4,149,374.90</div></div>
<div class="t n" style="left:190px;top:579px;color:#000">S110057649</div>
<div class="t r n" style="left:-15px;top:579px;width:400px;color:#000">31-Dec-2013</div>
<div class="t r n" style="left:85px;top:579px;width:400px;color:#000">31-Dec-2013</div>
<div class="t " style="left:490px;top:579px;color:#000;letter-spacing:-0.2px">TRS</div>
<div class="t r n" style="left:212px;top:579px;width:400px;color:#000">0.00</div>
<div class="t r n" style="left:312px;top:579px;width:400px;color:#000">0.00</div>
<div class="t r n" style="left:359px;top:579px;width:400px;color:#000">10.00</div>
<div class="t r n" style="left:459px;top:579px;width:400px;color:#000">935,059.20</div>
<div class="t r n" style="left:559px;top:579px;width:400px;color:#000">0.00</div>
<div class="t r n" style="left:659px;top:579px;width:400px;color:#000">9,350,592.00</div>
<div class="a" style="left:1063px;top:577px;width:32px;height:15px;overflow:hidden"><div class="t n r" style="left:0;top:2px;width:95px;color:#000">10,285,651.20</div></div>
<div class="t n" style="left:190px;top:594px;color:#000">TI1312103104</div>
<div class="t r n" style="left:-15px;top:594px;width:400px;color:#000">02-Jan-2014</div>
<div class="t r n" style="left:85px;top:594px;width:400px;color:#000">02-Jan-2014</div>
<div class="t " style="left:490px;top:594px;color:#000;letter-spacing:-0.2px">PSM</div>
<div class="t r n" style="left:212px;top:594px;width:400px;color:#000">0.00</div>
<div class="t r n" style="left:312px;top:594px;width:400px;color:#000">0.00</div>
<div class="t r n" style="left:359px;top:594px;width:400px;color:#000">10.00</div>
<div class="t r n" style="left:459px;top:594px;width:400px;color:#000">1,155,927.40</div>
<div class="t r n" style="left:559px;top:594px;width:400px;color:#000">0.00</div>
<div class="t r n" style="left:659px;top:594px;width:400px;color:#000">11,559,274.00</div>
<div class="a" style="left:1063px;top:592px;width:32px;height:15px;overflow:hidden"><div class="t n r" style="left:0;top:2px;width:95px;color:#000">12,715,201.40</div></div>
<div class="a" style="left:1095px;top:490px;width:16px;height:131px;background-color:#fcfcf8;background-image:linear-gradient(45deg,#ece9d8 25%,transparent 25%,transparent 75%,#ece9d8 75%),linear-gradient(45deg,#ece9d8 25%,transparent 25%,transparent 75%,#ece9d8 75%);background-size:2px 2px;background-position:0 0,1px 1px"></div>
<div class="a" style="left:1095px;top:490px;width:16px;height:16px;background:linear-gradient(to bottom,#ffffff,#f0f0ea)"></div>
<svg style="left:1099.5px;top:496px" width="7" height="4"><path d="M0 4H7L3.5 0Z" fill="#404040"/></svg>
<div class="a" style="left:1095px;top:605px;width:16px;height:16px;background:linear-gradient(to bottom,#f6f6f2,#ffffff)"></div>
<svg style="left:1099.5px;top:612px" width="7" height="4"><path d="M0 0H7L3.5 4Z" fill="#404040"/></svg>
<div class="a" style="left:1095px;top:568px;width:16px;height:38px;background:#ECE9D8;box-sizing:border-box;border-top:1px solid #d8d5c4;border-bottom:1px solid #b8b5a4"></div>
<div class="a" style="left:169px;top:621px;width:926px;height:16px;background-color:#fcfcf8;background-image:linear-gradient(45deg,#ece9d8 25%,transparent 25%,transparent 75%,#ece9d8 75%),linear-gradient(45deg,#ece9d8 25%,transparent 25%,transparent 75%,#ece9d8 75%);background-size:2px 2px;background-position:0 0,1px 1px"></div>
<div class="a" style="left:169px;top:621px;width:463px;height:16px;background:#ECE9D8;box-sizing:border-box;border-top:1px solid #9a9788;border-right:1px solid #9a9788"></div>
<div class="a" style="left:185px;top:621px;width:1px;height:16px;background:#9a9788"></div>
<svg style="left:175px;top:624.5px" width="5" height="9"><path d="M5 0V9L0 4.5Z" fill="#000"/></svg>
<div class="a" style="left:1078px;top:621px;width:17px;height:16px;background:#ECE9D8;box-sizing:border-box;border:1px solid #c8c5b4;border-bottom:none"></div>
<svg style="left:1085px;top:624.5px" width="5" height="9"><path d="M0 0V9L5 4.5Z" fill="#000"/></svg>
<div class="a" style="left:1095px;top:621px;width:16px;height:16px;background:#c8c8c4"></div>
<div class="a" style="left:168px;top:641px;width:49px;height:41px;box-sizing:border-box;border:1px solid #003c74;border-radius:3px;background:linear-gradient(to bottom,#ffffff 0%,#f6f6f2 60%,#e6e5de 100%)"></div>
<svg style="left:184.5px;top:645px" width="17" height="17" viewBox="0 0 17 17"><defs><linearGradient id="gp" x1="0" y1="0" x2="0" y2="1"><stop offset="0" stop-color="#ffd040"/><stop offset="1" stop-color="#f89010"/></linearGradient></defs><rect x="-0.2" y="2.5" width="7.5" height="13.5" rx="1" fill="url(#gp)"/><rect x="9" y="2" width="4" height="3" fill="#f8a020"/><rect x="5" y="4" width="6" height="1.5" fill="#404040"/><rect x="5.5" y="0" width="1.3" height="2.5" fill="#707070"/><path d="M6.8 5.8H13L15.3 8.1V15.8H6.8Z" fill="#fff" stroke="#2a5aa8" stroke-width="1"/></svg>
<div class="t c" style="left:152.5px;top:664px;width:80px;color:#000;letter-spacing:-0.2px;">Pa<span class="u">s</span>te</div>
<div class="t " style="left:223px;top:642px;color:#000;letter-spacing:-0.1px;word-spacing:1px">Total Record</div>
<div class="t " style="left:315px;top:642px;font-weight:bold">:</div>
<div class="t n" style="left:329px;top:642px;color:#000">16</div>
<div class="t " style="left:223px;top:666px;color:#000;letter-spacing:-0.5px;word-spacing:1px">Posisi Record  ke</div>
<div class="t " style="left:315px;top:666px;font-weight:bold">:</div>
<div class="t n" style="left:329px;top:666px;color:#000">13</div>
<div class="t r " style="left:569px;top:642px;width:400px;color:#000;letter-spacing:-0.4px;word-spacing:1px">Cari Data</div>
<div class="a" style="left:976px;top:641px;width:20px;height:20px;background:#fff;box-sizing:border-box;border:1px solid #000;"></div>
<svg style="left:977px;top:642px" width="19" height="19" viewBox="0 0 19 19"><circle cx="7" cy="7" r="5.5" fill="#cfe4fa" stroke="#6a9ad8" stroke-width="1.5"/><path d="M11 11L16.5 16.5" stroke="#e08a10" stroke-width="3" stroke-linecap="round"/></svg>
<div class="a" style="left:1000px;top:641px;width:113px;height:20px;background:#fff;box-sizing:border-box;border:1px solid #000;"></div>
</body></html>
